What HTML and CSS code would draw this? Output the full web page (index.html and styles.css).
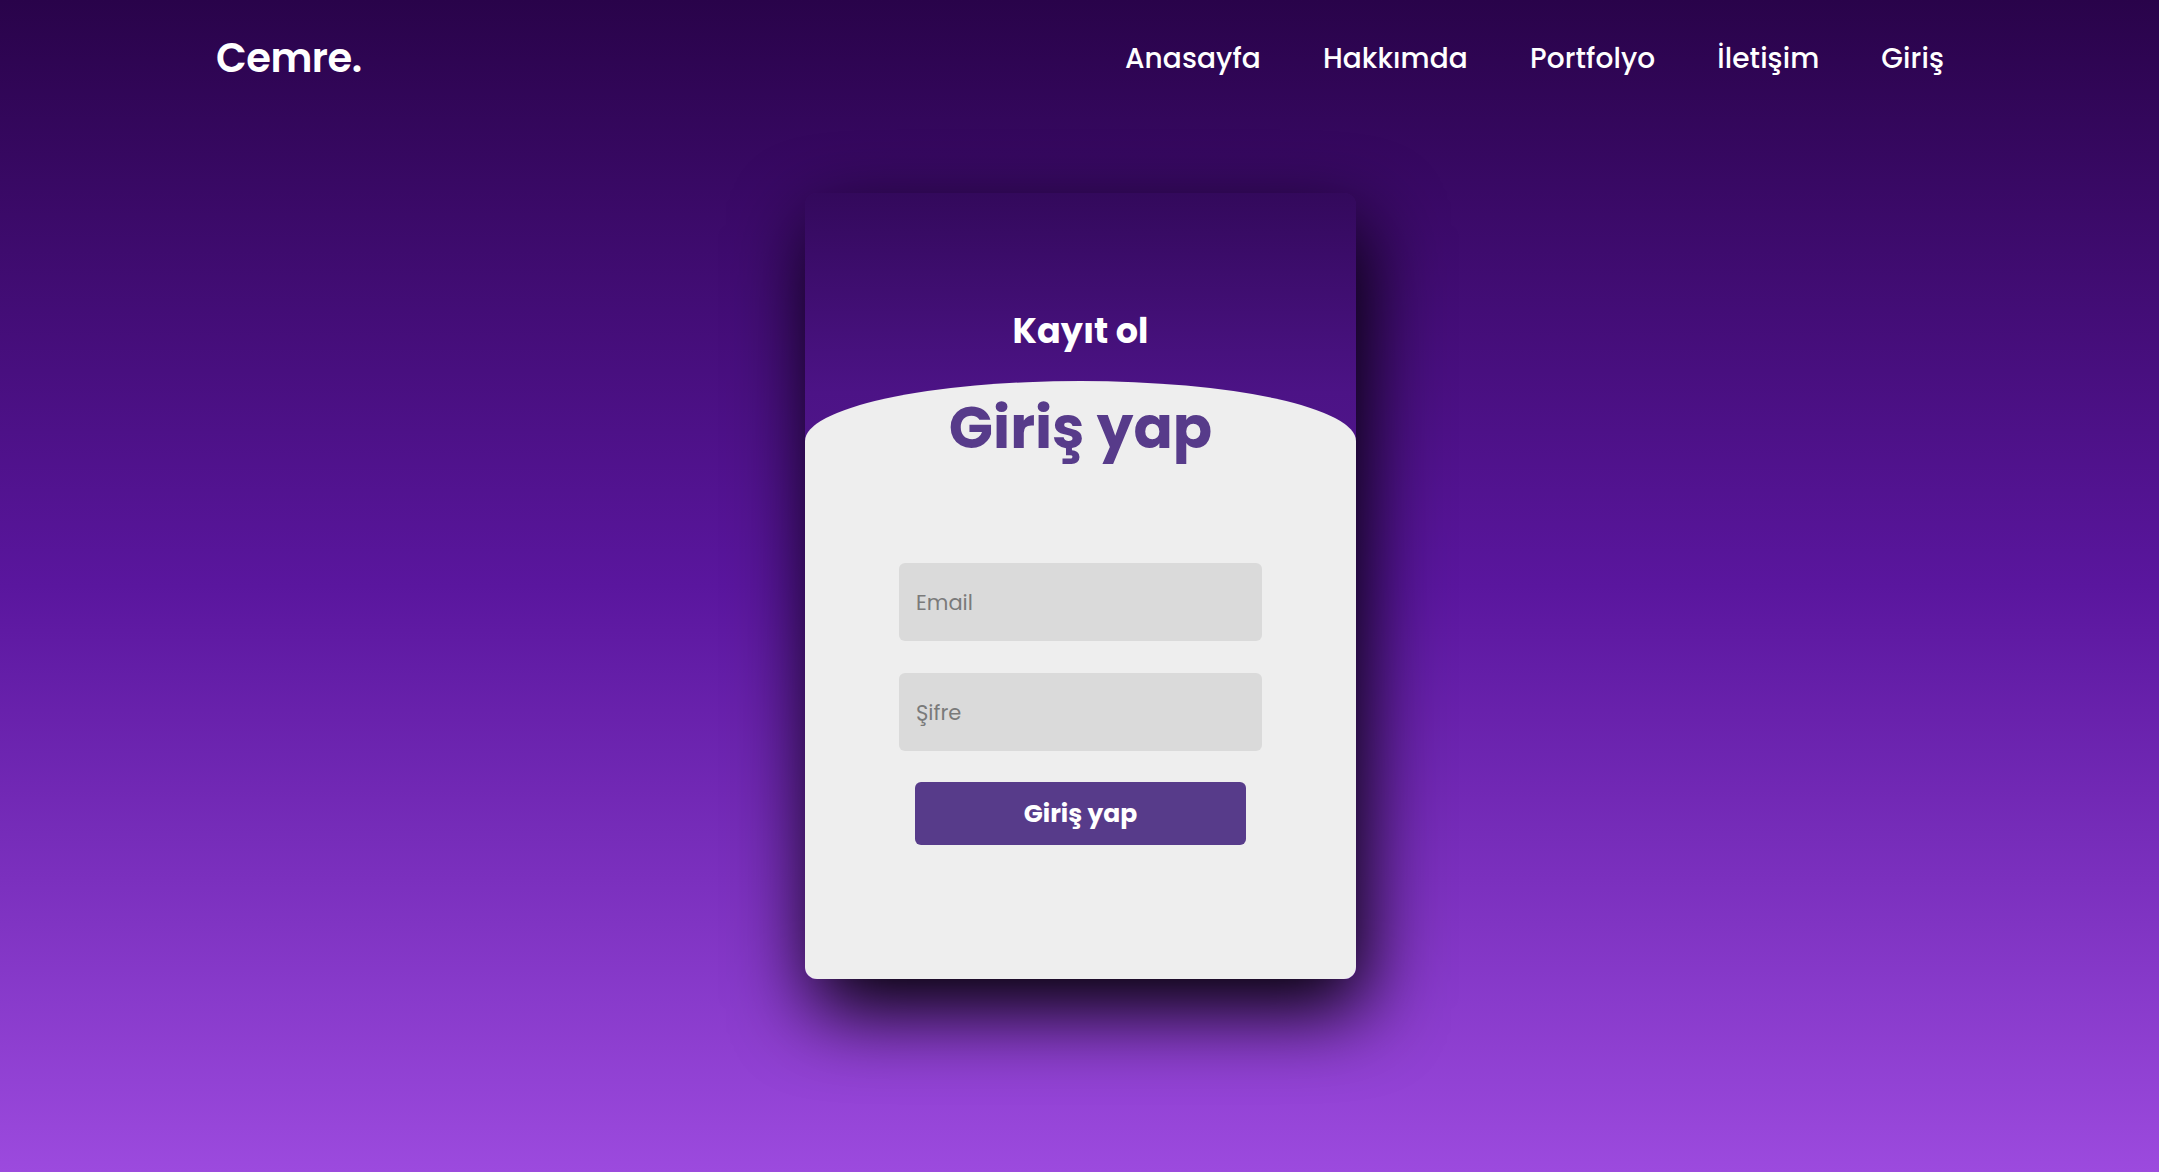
FILE: index.html
```html
<!DOCTYPE html>
<html lang="tr">
<head>
<meta charset="utf-8">
<title>Cemre. - Giriş</title>
<link rel="stylesheet" href="styles.css">
</head>
<body>
<header class="topbar">
  <a class="logo" href="#">Cemre.</a>
  <nav class="nav">
    <a href="#">Anasayfa</a>
    <a href="#">Hakkımda</a>
    <a href="#">Portfolyo</a>
    <a href="#">İletişim</a>
    <a href="#">Giriş</a>
  </nav>
</header>
<main class="stage">
  <div class="card">
    <div class="signup">
      <span class="signup-label">Kayıt ol</span>
    </div>
    <div class="login">
      <h1 class="login-label">Giriş yap</h1>
      <form class="login-form">
        <input class="field" type="email" placeholder="Email">
        <input class="field" type="password" placeholder="Şifre">
        <button class="btn" type="button">Giriş yap</button>
      </form>
    </div>
  </div>
</main>
</body>
</html>
```

FILE: styles.css
```css
* { box-sizing: border-box; }

html, body {
  margin: 0;
  padding: 0;
}

body {
  min-height: 100vh;
  font-family: "Poppins", "Open Sans", "Noto Sans", sans-serif;
  background: linear-gradient(180deg, #29034a 0%, #5a169e 50%, #9c4ade 100%);
  overflow: hidden;
}

.topbar {
  height: 112px;
  padding: 3px 215px 0 216px;
  display: flex;
  align-items: center;
  justify-content: space-between;
}

.logo {
  color: #fff;
  text-decoration: none;
  font-size: 40px;
  font-weight: 600;
  letter-spacing: -0.5px;
}

.nav {
  display: flex;
  gap: 62px;
  padding-top: 2px;
}

.nav a {
  color: #fff;
  text-decoration: none;
  font-size: 28px;
  font-weight: 500;
  letter-spacing: 0.1px;
}

.stage {
  display: flex;
  justify-content: center;
  padding-top: 81px;
  padding-left: 2px;
}

.card {
  width: 551px;
  height: 786px;
  border-radius: 12px;
  overflow: hidden;
  display: flex;
  flex-direction: column;
  background: linear-gradient(180deg, #33095c 0px, #4c1386 200px, #6a24b0 786px);
  box-shadow: 8px 31px 79px #000;
}

.signup {
  height: 188px;
  display: flex;
  justify-content: center;
  padding-top: 111px;
}

.signup-label {
  color: #fff;
  font-size: 35px;
  font-weight: 700;
  line-height: 54px;
  height: 54px;
}

.login {
  flex: 1;
  background: #eeeeee;
  border-radius: 50% 50% 0 0 / 60px 60px 0 0;
  display: flex;
  flex-direction: column;
  align-items: center;
}

.login-label {
  margin: 12px 0 0;
  font-size: 58px;
  font-weight: 700;
  line-height: 70px;
  color: #573b8a;
}

.login-form {
  margin-top: 100px;
  display: flex;
  flex-direction: column;
  align-items: center;
}

.field {
  width: 363px;
  height: 78px;
  border: none;
  border-radius: 6px;
  background: #dadada;
  padding: 0 17px;
  font-family: inherit;
  font-size: 21px;
  color: #333;
  outline: none;
  margin-bottom: 32px;
}

.field:last-of-type {
  margin-bottom: 31px;
}

.field::placeholder {
  color: #7a7a7a;
}

.btn {
  width: 331px;
  height: 63px;
  border: none;
  border-radius: 6px;
  background: #573b8a;
  color: #fff;
  font-family: inherit;
  font-size: 25px;
  font-weight: 700;
  cursor: pointer;
}
```
